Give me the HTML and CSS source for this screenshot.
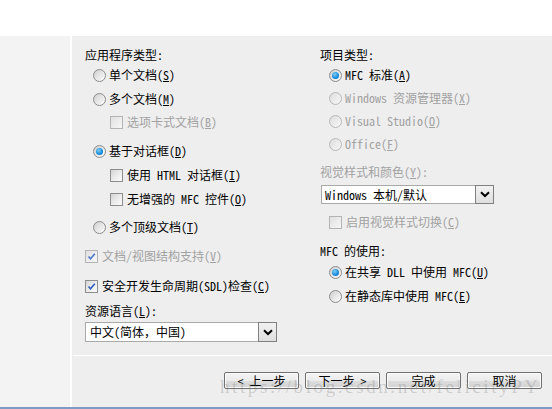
FILE: index.html
```html
<!DOCTYPE html>
<html lang="zh-CN">
<head>
<meta charset="utf-8">
<title>MFC 应用程序</title>
<link rel="stylesheet" href="styles.css">
</head>
<body>
<div class="top"></div>
<div class="middle">
  <div class="sidebar"></div>
  <div class="main">
    <div class="content">
      <div class="col left">
        <div class="row">应用程序类型:</div>
        <div class="row ind8 mt4"><span class="radio"></span>单个文档(<u>S</u>)</div>
        <div class="row ind8 mt8"><span class="radio"></span>多个文档(<u>M</u>)</div>
        <div class="row ind25 mt7 dis"><span class="check dis"></span>选项卡式文档(<u>B</u>)</div>
        <div class="row ind8 mt13"><span class="radio on"></span>基于对话框(<u>D</u>)</div>
        <div class="row ind25 mt8"><span class="check"></span>使用 HTML 对话框(<u>I</u>)</div>
        <div class="row ind25 mt8"><span class="check"></span>无增强的 MFC 控件(<u>O</u>)</div>
        <div class="row ind8 mt12"><span class="radio"></span>多个顶级文档(<u>T</u>)</div>
        <div class="row mt13 dis"><span class="check dis"><svg viewBox="0 0 11 11" width="11" height="11"><path d="M2.5 5.5 L4.5 7.8 L8.8 2.8" fill="none" stroke="#4c78c8" stroke-width="1.6"/></svg></span>文档/视图结构支持(<u>V</u>)</div>
        <div class="row mt14"><span class="check"><svg viewBox="0 0 11 11" width="11" height="11"><path d="M2.5 5.5 L4.5 7.8 L8.8 2.8" fill="none" stroke="#2d5fc0" stroke-width="1.6"/></svg></span>安全开发生命周期(SDL)检查(<u>C</u>)</div>
        <div class="row mt9">资源语言(<u>L</u>):</div>
        <div class="combo wide mt3">
          <span class="combo-text">中文(简体，中国)</span>
          <span class="combo-btn"><svg viewBox="0 0 10 7" width="10" height="7"><path d="M1 1.2 L5 5 L9 1.2" fill="none" stroke="#000" stroke-width="2"/></svg></span>
        </div>
      </div>
      <div class="col right">
        <div class="row">项目类型:</div>
        <div class="row ind9 mt4"><span class="radio on"></span>MFC 标准(<u>A</u>)</div>
        <div class="row ind9 mt7 dis"><span class="radio dis"></span>Windows 资源管理器(<u>X</u>)</div>
        <div class="row ind9 mt7 dis"><span class="radio dis"></span>Visual Studio(<u>O</u>)</div>
        <div class="row ind9 mt7 dis"><span class="radio dis"></span>Office(<u>F</u>)</div>
        <div class="row mt12 dis">视觉样式和颜色(<u>Y</u>):</div>
        <div class="combo narrow mt5">
          <span class="combo-text">Windows 本机/默认</span>
          <span class="combo-btn"><svg viewBox="0 0 10 7" width="10" height="7"><path d="M1 1.2 L5 5 L9 1.2" fill="none" stroke="#000" stroke-width="2"/></svg></span>
        </div>
        <div class="row ind9 mt10 dis"><span class="check dis"></span>启用视觉样式切换(<u>C</u>)</div>
        <div class="row mt13">MFC 的使用:</div>
        <div class="row ind9 mt5"><span class="radio on"></span>在共享 DLL 中使用 MFC(<u>U</u>)</div>
        <div class="row ind9 mt8"><span class="radio"></span>在静态库中使用 MFC(<u>E</u>)</div>
      </div>
    </div>
    <div class="divider"></div>
    <div class="footer">
      <button class="btn">&lt; 上一步</button>
      <button class="btn">下一步 &gt;</button>
      <button class="btn">完成</button>
      <button class="btn">取消</button>
    </div>
  </div>
</div>
<div class="bottom"></div>
<div class="watermark">https://blog.csdn.net/felicityPY</div>
</body>
</html>
```
FILE: styles.css
```css
* { box-sizing: border-box; }
html, body { margin: 0; padding: 0; }
body {
  width: 552px;
  height: 409px;
  overflow: hidden;
  background: #ffffff;
  font-family: "Noto Sans Mono CJK SC", "Noto Sans CJK SC", "Liberation Mono", monospace;
  font-size: 12px;
  color: #000;
  position: relative;
}
.top { height: 36px; background: #fff; }
.middle { display: flex; height: 371px; }
.sidebar { width: 72px; background: #f3f3f3; border-right: 2px solid #fff; }
.main { flex: 1; background: #eeeeee; display: flex; flex-direction: column; }
.content { height: 319px; display: flex; padding: 11px 0 0 13px; }
.col { display: flex; flex-direction: column; }
.left { width: 192px; }
.right { width: 173px; margin-left: 43px; }
.row { height: 16px; line-height: 16px; display: flex; align-items: center; white-space: nowrap; }
.row u { text-decoration: underline; text-underline-offset: 1px; }
.dis { color: #a2a2a2; }
.ind8 { padding-left: 8px; }
.ind9 { padding-left: 9px; }
.ind25 { padding-left: 25px; }
.mt3 { margin-top: 3px; }
.mt4 { margin-top: 4px; }
.mt5 { margin-top: 5px; }
.mt7 { margin-top: 7px; }
.mt8 { margin-top: 8px; }
.mt9 { margin-top: 9px; }
.mt10 { margin-top: 10px; }
.mt12 { margin-top: 12px; }
.mt13 { margin-top: 13px; }
.mt14 { margin-top: 14px; }

.radio {
  flex: none;
  width: 13px; height: 13px;
  border-radius: 50%;
  border: 1px solid #8c8c8c;
  background: linear-gradient(135deg, #cdcdcd 0%, #e9e9e9 55%, #fbfbfb 100%);
  margin-right: 3px;
  position: relative;
}
.radio.on::after {
  content: "";
  position: absolute;
  left: 2px; top: 2px;
  width: 7px; height: 7px;
  border-radius: 50%;
  background: radial-gradient(circle at 40% 35%, #7fd0fb 0%, #1b8ddb 55%, #0a6ec0 100%);
}
.radio.dis { border-color: #b8b8b8; background: linear-gradient(135deg, #dcdcdc 0%, #ececec 55%, #f6f6f6 100%); }

.check {
  flex: none;
  width: 13px; height: 13px;
  border: 1px solid #8e8e8e;
  background: linear-gradient(135deg, #d4d4d4 0%, #ededed 55%, #fbfbfb 100%);
  margin-right: 4px;
  display: flex; align-items: center; justify-content: center;
}
.check.dis { border-color: #b4b4b4; background: linear-gradient(135deg, #e0e0e0 0%, #ededed 55%, #f6f6f6 100%); }

.combo {
  display: flex;
  background: #fff;
  border: 1px solid #a9a9a9;
  align-items: stretch;
}
.combo.wide { width: 192px; height: 20px; }
.combo.narrow { width: 173px; height: 19px; margin-left: 1px; }
.combo-text { flex: 1; padding-left: 4px; line-height: 17px; white-space: nowrap; }
.narrow .combo-text { padding-left: 3px; }
.combo-btn {
  width: 19px;
  border: 1px solid #808080;
  background: linear-gradient(#f2f2f2, #dedede);
  display: flex; align-items: center; justify-content: center;
  margin: -1px -1px -1px 0;
}

.divider { height: 1px; background: #fff; margin-left: 1px; }
.footer {
  flex: 1;
  display: flex;
  justify-content: flex-end;
  align-items: flex-start;
  gap: 6px;
  padding: 16px 10px 0 0;
}
.btn {
  width: 75px; height: 17px;
  padding: 0;
  font: inherit;
  line-height: 14px;
  color: #000;
  border: 1px solid #707070;
  border-radius: 2px;
  background: linear-gradient(#f4f4f4 0%, #ebebeb 50%, #dddddd 51%, #d3d3d3 100%);
  box-shadow: inset 0 0 0 1px #fbfbfb;
}
.bottom { height: 2px; background: #7d9bc4; }
.watermark {
  position: absolute;
  left: 220px; top: 376px;
  font-family: "Liberation Serif", serif;
  font-size: 19px;
  letter-spacing: 2.6px;
  color: rgba(120, 120, 120, 0.28);
  white-space: nowrap;
  pointer-events: none;
}
```
